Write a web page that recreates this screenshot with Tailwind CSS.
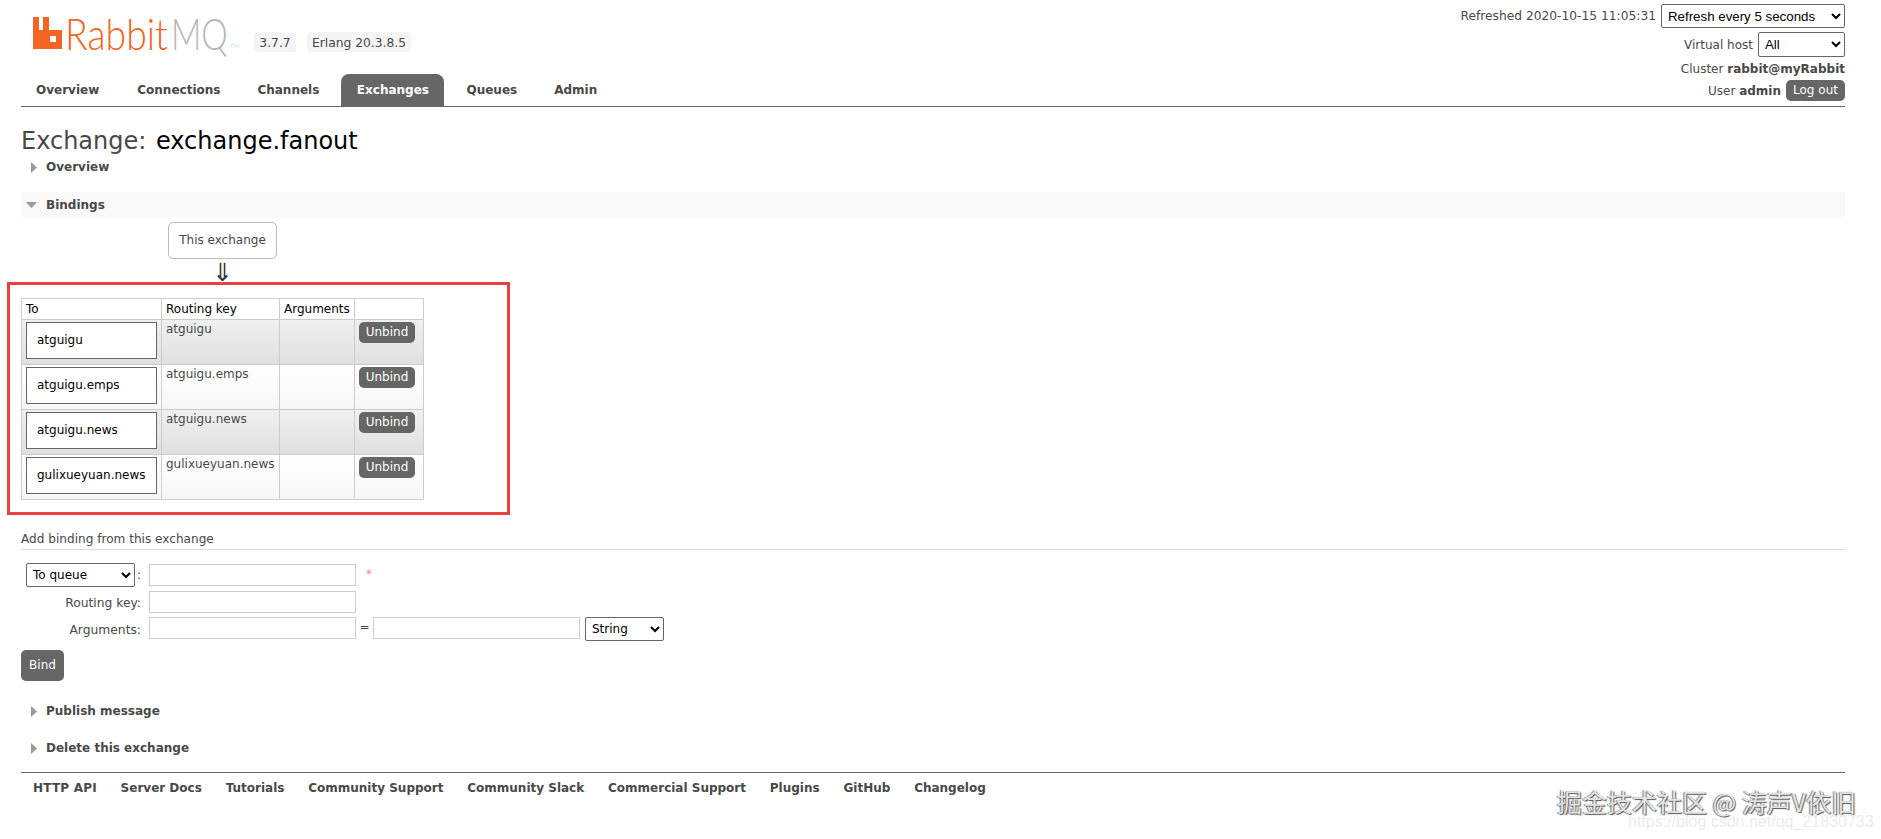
<!DOCTYPE html>
<html lang="en">
<head>
  <meta charset="UTF-8">
  <title>RabbitMQ Management</title>
  <script src="https://cdn.jsdelivr.net/npm/@tailwindcss/browser@4"></script>
</head>
<body class="bg-white text-[#484848] font-['DejaVu_Sans',sans-serif] text-[12px] overflow-hidden h-[839px] relative">
  <div class="pl-[21px] pr-[36px]">

    <!-- header -->
    <div class="flex justify-between h-[107px] border-b border-[#666]">
      <div class="flex flex-col justify-between">
        <div class="flex pt-[6px] pl-[12px] h-[60px]">
          <svg class="w-[29px] h-[32px] mt-[11px]" viewBox="0 0 29 32">
            <path fill="#f26522" fill-rule="evenodd" d="M0 0H6V13H10V0H16V13H29V32H0ZM17 19V25H23V19Z"/>
          </svg>
          <div class="flex ml-[6px] w-[165px] h-[54px] font-['Lato',sans-serif] font-light text-[44px] leading-[54px] whitespace-nowrap">
            <span class="block -ml-[3px] w-[106px] origin-left scale-x-[0.85] text-[#f26522]">Rabbit</span><span class="block w-[59px] origin-left scale-x-[0.76] text-[#b4b8b8]">MQ</span>
            <span class="block text-[6px] leading-[6px] mt-[37px] text-[#b4b8b8]">TM</span>
          </div>
          <span class="ml-[21px] mt-[26px] h-[20px] w-[42px] text-center rounded bg-[#f4f4f4] text-[12.3px] leading-[22px]">3.7.7</span>
          <span class="ml-[11px] mt-[26px] h-[20px] w-[104px] text-center rounded bg-[#f4f4f4] text-[12.3px] leading-[22px]">Erlang 20.3.8.5</span>
        </div>
        <nav class="flex gap-[7px] font-bold h-[32px] leading-[33px]">
          <a class="px-[15px]">Overview</a>
          <a class="ml-[1px] px-[15px]">Connections</a>
          <a class="px-[15px]">Channels</a>
          <a class="px-[15.5px] bg-[#666] text-white rounded-t-[8px]">Exchanges</a>
          <a class="px-[15px]">Queues</a>
          <a class="px-[15px]">Admin</a>
        </nav>
      </div>
      <div class="flex flex-col items-end pt-[4px]">
        <div class="flex items-center h-[24px] gap-[5px]">
          <span class="text-[12.25px]">Refreshed 2020-10-15 11:05:31</span>
          <select class="w-[184px] h-[24px] border border-[#666] rounded-[2px] bg-white text-black pl-[2px] font-['Liberation_Sans',sans-serif] text-[13.3px]">
            <option>Refresh every 5 seconds</option>
          </select>
        </div>
        <div class="flex items-center h-[25px] gap-[5px] mt-[4px]">
          <span>Virtual host</span>
          <select class="w-[87px] h-[25px] border border-[#666] rounded-[2px] bg-white text-black pl-[2px] font-['Liberation_Sans',sans-serif] text-[13.3px]">
            <option>All</option>
          </select>
        </div>
        <div class="h-[14px] leading-[14px] mt-[5px]">Cluster <b>rabbit@myRabbit</b></div>
        <div class="flex items-center gap-[5px] mt-[4px]">
          <span>User <b>admin</b></span>
          <span class="w-[59px] h-[21px] bg-[#666] text-white rounded-[5px] text-center leading-[21px]">Log out</span>
        </div>
      </div>
    </div>

    <h1 class="mt-[19px] h-[30px] leading-[30px] text-[24px]">Exchange: <span class="ml-[2px] text-black">exchange.fanout</span></h1>

    <div class="flex items-center h-[20px] mt-[1px] font-bold">
      <svg class="w-[6px] h-[11px] ml-[10px] mr-[9px]" viewBox="0 0 6 11"><path fill="#999" d="M0 0L6 5.5L0 11Z"/></svg>
      Overview
    </div>

    <div class="flex items-center h-[25px] mt-[15px] font-bold bg-[#f9f9f9]">
      <svg class="w-[11px] h-[6px] ml-[5px] mr-[9px]" viewBox="0 0 11 6"><path fill="#999" d="M0 0H11L5.500 6Z"/></svg>
      Bindings
    </div>

    <div class="ml-[147px] mt-[5px] w-[109px] h-[37px] border border-[#bbb] rounded-[5px] text-center leading-[35px]">This exchange</div>
    <div class="ml-[147px] w-[109px] h-[23px] text-center text-[25px] leading-[27px] text-[#333]">⇓</div>

    <!-- bindings table, with the red annotation box round it -->
    <div class="-ml-[14px] w-[503px] h-[233px] border-[3px] border-[#e84040] pt-[13px] pl-[11px]">
      <table class="w-[403px] table-fixed border-collapse border border-[#ccc]">
        <thead>
          <tr class="h-[21px] text-black font-normal">
            <th class="w-[140px] border border-[#ccc] font-normal text-left pl-[4px]">To</th>
            <th class="w-[118px] border border-[#ccc] font-normal text-left pl-[4px]">Routing key</th>
            <th class="w-[75px] border border-[#ccc] font-normal text-left pl-[4px]">Arguments</th>
            <th class="border border-[#ccc]"></th>
          </tr>
        </thead>
        <tbody>
          <tr class="h-[45px] bg-gradient-to-b from-[#f0f0f0] to-[#dfdfdf]">
            <td class="border border-[#ccc] p-[2px_4px] align-top"><div class="w-[131px] h-[37px] border-[1.5px] border-[#666] bg-white text-black pl-[10px] leading-[34px]">atguigu</div></td>
            <td class="border border-[#ccc] pl-[4px] pt-0 align-top">atguigu</td>
            <td class="border border-[#ccc]"></td>
            <td class="border border-[#ccc] pl-[4px] pt-[2px] align-top"><div class="w-[56px] h-[21px] bg-[#666] text-white rounded-[5px] text-center leading-[21px]">Unbind</div></td>
          </tr>
          <tr class="h-[45px] bg-gradient-to-b from-[#ffffff] to-[#f6f6f6]">
            <td class="border border-[#ccc] p-[2px_4px] align-top"><div class="w-[131px] h-[37px] border-[1.5px] border-[#666] bg-white text-black pl-[10px] leading-[34px]">atguigu.emps</div></td>
            <td class="border border-[#ccc] pl-[4px] pt-0 align-top">atguigu.emps</td>
            <td class="border border-[#ccc]"></td>
            <td class="border border-[#ccc] pl-[4px] pt-[2px] align-top"><div class="w-[56px] h-[21px] bg-[#666] text-white rounded-[5px] text-center leading-[21px]">Unbind</div></td>
          </tr>
          <tr class="h-[45px] bg-gradient-to-b from-[#f0f0f0] to-[#dfdfdf]">
            <td class="border border-[#ccc] p-[2px_4px] align-top"><div class="w-[131px] h-[37px] border-[1.5px] border-[#666] bg-white text-black pl-[10px] leading-[34px]">atguigu.news</div></td>
            <td class="border border-[#ccc] pl-[4px] pt-0 align-top">atguigu.news</td>
            <td class="border border-[#ccc]"></td>
            <td class="border border-[#ccc] pl-[4px] pt-[2px] align-top"><div class="w-[56px] h-[21px] bg-[#666] text-white rounded-[5px] text-center leading-[21px]">Unbind</div></td>
          </tr>
          <tr class="h-[45px] bg-gradient-to-b from-[#ffffff] to-[#f6f6f6]">
            <td class="border border-[#ccc] p-[2px_4px] align-top"><div class="w-[131px] h-[37px] border-[1.5px] border-[#666] bg-white text-black pl-[10px] leading-[34px]">gulixueyuan.news</div></td>
            <td class="border border-[#ccc] pl-[4px] pt-0 align-top">gulixueyuan.news</td>
            <td class="border border-[#ccc]"></td>
            <td class="border border-[#ccc] pl-[4px] pt-[2px] align-top"><div class="w-[56px] h-[21px] bg-[#666] text-white rounded-[5px] text-center leading-[21px]">Unbind</div></td>
          </tr>
        </tbody>
      </table>
    </div>

    <!-- add binding form -->
    <div class="mt-[14px] h-[21px] leading-[20px] text-[12.1px] border-b border-[#ddd]">Add binding from this exchange</div>

    <div class="flex items-center h-[24px] mt-[13px]">
      <div class="w-[120px] mr-[8px] flex items-center">
        <select class="ml-[5px] w-[110px] h-[24px] border border-[#666] rounded-[2px] bg-white text-black pl-[2px] text-[12px]">
          <option>To queue</option>
        </select>
        <span class="ml-[2px]">:</span>
      </div>
      <input class="w-[207px] h-[22px] border border-[#ccc]">
      <span class="ml-[10px] -mt-[3px] text-[#f28b8b] text-[12px]">*</span>
    </div>
    <div class="flex items-center h-[22px] mt-[4px]">
      <label class="w-[120px] mr-[8px] pt-[2px] text-right text-[12.3px]">Routing key:</label>
      <input class="w-[207px] h-[22px] border border-[#ccc]">
    </div>
    <div class="flex items-start h-[24px] mt-[4px]">
      <label class="w-[120px] mr-[8px] pt-[1px] text-right text-[12.3px] leading-[24px]">Arguments:</label>
      <input class="w-[207px] h-[22px] border border-[#ccc]">
      <span class="w-[17px] text-center leading-[20px]">=</span>
      <input class="w-[207px] h-[22px] border border-[#ccc]">
      <select class="ml-[5px] w-[79px] h-[24px] border border-[#666] rounded-[2px] bg-white text-black pl-[2px] text-[12px]">
        <option>String</option>
      </select>
    </div>

    <div class="mt-[9px] w-[43px] h-[31px] bg-[#666] text-white rounded-[5px] text-center leading-[31px]">Bind</div>

    <div class="flex items-center h-[20px] mt-[20px] font-bold">
      <svg class="w-[6px] h-[11px] ml-[10px] mr-[9px]" viewBox="0 0 6 11"><path fill="#999" d="M0 0L6 5.500L0 11Z"/></svg>
      Publish message
    </div>
    <div class="flex items-center h-[20px] mt-[17px] font-bold">
      <svg class="w-[6px] h-[11px] ml-[10px] mr-[9px]" viewBox="0 0 6 11"><path fill="#999" d="M0 0L6 5.500L0 11Z"/></svg>
      Delete this exchange
    </div>

    <!-- footer -->
    <div class="flex gap-[23.8px] mt-[14px] pt-[6px] pl-[12px] border-t border-[#666] font-bold">
      <a class="tracking-[0.2px]">HTTP API</a>
      <a>Server Docs</a>
      <a>Tutorials</a>
      <a>Community Support</a>
      <a>Community Slack</a>
      <a>Commercial Support</a>
      <a>Plugins</a>
      <a>GitHub</a>
      <a>Changelog</a>
    </div>
  </div>

  <!-- watermarks over the page -->
  <div class="absolute left-[1557px] top-[789px] text-[25px] leading-[24px] whitespace-nowrap text-[#e4e4e4] font-['Noto_Sans_CJK_SC',sans-serif] [text-shadow:1px_1px_1px_#555,-1px_0_1px_#777]">掘金技术社区 @ 涛声V依旧</div>
  <div class="absolute left-[1628px] top-[814px] text-[16px] leading-[16px] whitespace-nowrap text-[#ececec] font-['Liberation_Sans',sans-serif]">https://blog.csdn.net/qq_21830733</div>
</body>
</html>
